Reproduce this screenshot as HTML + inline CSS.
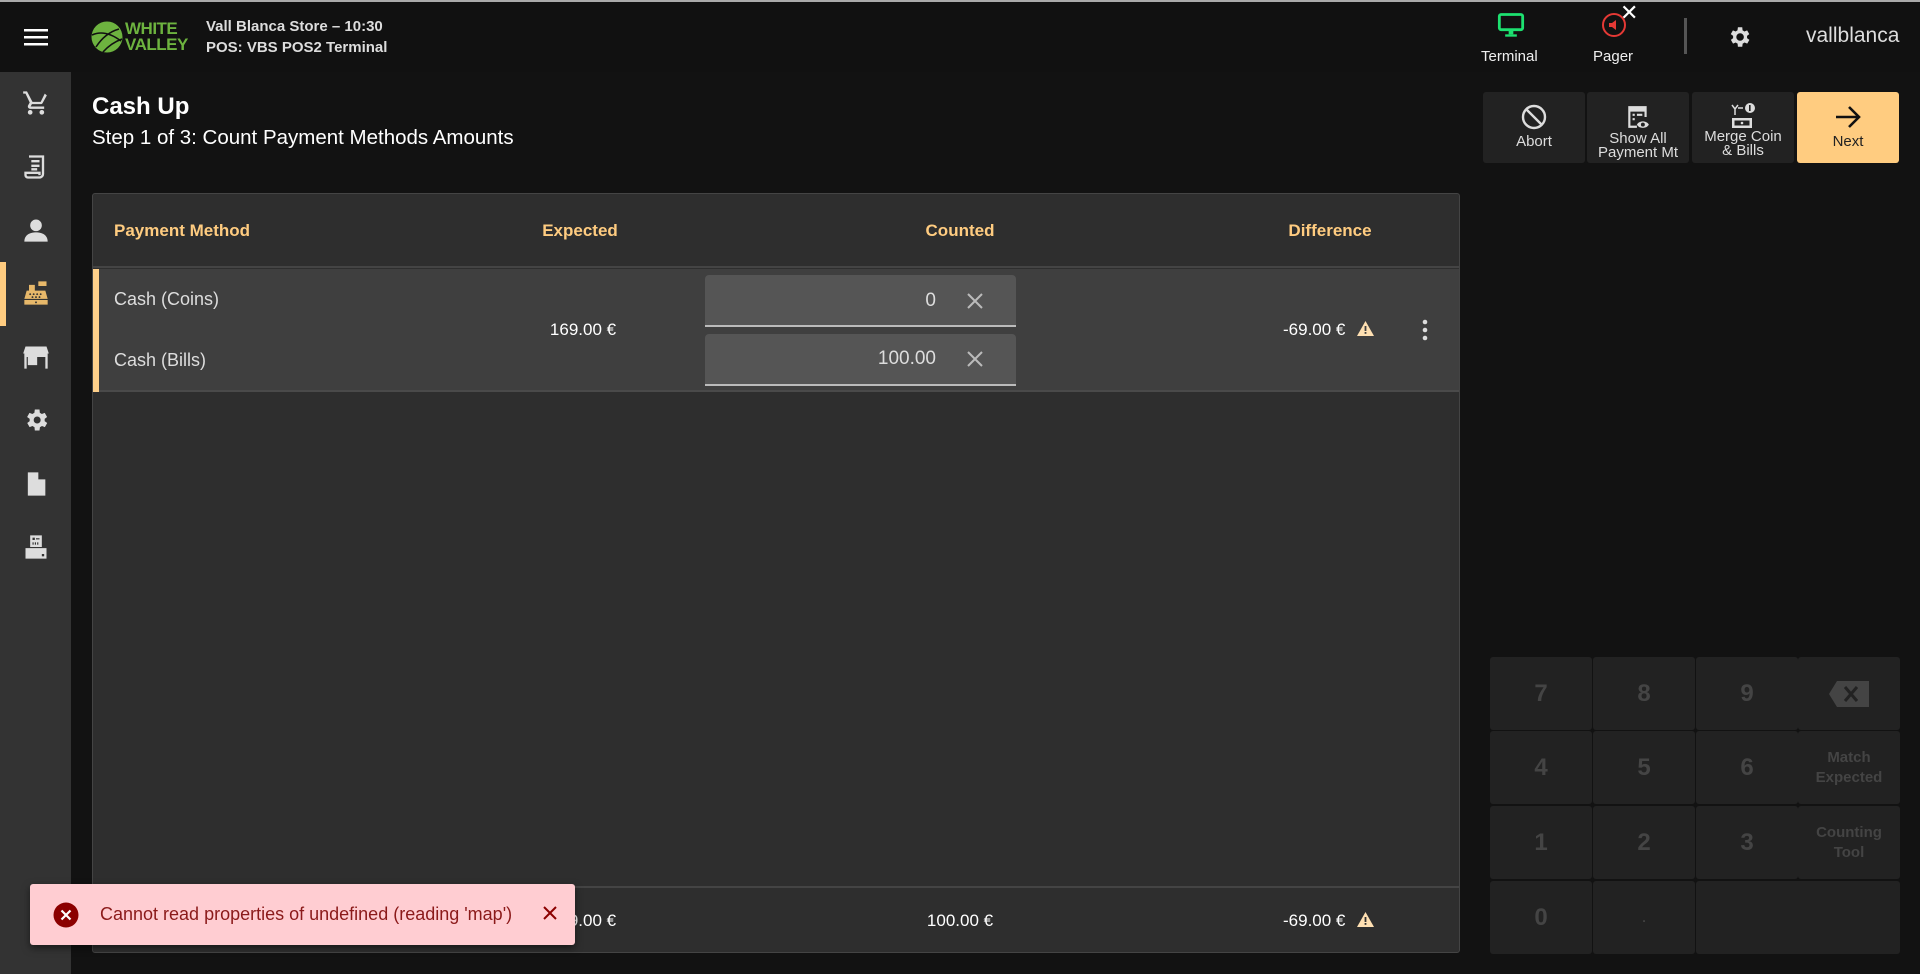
<!DOCTYPE html>
<html><head><meta charset="utf-8"><style>
*{margin:0;padding:0;box-sizing:border-box}
body{width:1920px;height:974px;background:#121212;font-family:"Liberation Sans",Arial,sans-serif;color:#fff;position:relative;overflow:hidden}
.a{position:absolute}
.top{left:0;top:0;width:1920px;height:72px;background:#111;border-top:2px solid #aaa}
.side{left:0;top:72px;width:71px;height:902px;background:#333}
.ic{position:absolute;left:22px;width:28px;height:28px}
.hdr{color:#ffcc80;font-weight:bold;font-size:17px}
.btn{position:absolute;top:92px;height:71px;width:102px;background:#222;border-radius:3px;text-align:center;font-size:15px;color:#ddd;line-height:14px}
.key{position:absolute;width:102px;height:73px;background:#222;border-radius:3px;color:#444;font-weight:bold;font-size:24px;display:flex;align-items:center;justify-content:center;text-align:center}
.key.s{font-size:15px;font-weight:bold;line-height:20px}
</style></head><body>
<div class="a top"></div>
<svg class="a" style="left:24px;top:28px" width="24" height="18"><rect y="1" width="24" height="2.5" fill="#fff"/><rect y="8" width="24" height="2.5" fill="#fff"/><rect y="15" width="24" height="2.5" fill="#fff"/></svg>
<svg class="a" style="left:91px;top:21px" width="33" height="33"><circle cx="16" cy="16" r="15.5" fill="#6db33f"/><path d="M1 14 Q14 8 30 20 M5 26 Q14 12 28 8 M12 31 Q20 22 31 18" stroke="#111" stroke-width="1.6" fill="none"/></svg>
<div class="a" style="left:125px;top:21px;color:#6db33f;font-weight:bold;font-size:17px;line-height:16px;letter-spacing:-0.5px">WHITE<br>VALLEY</div>
<div class="a" style="left:206px;top:16px;font-size:15px;line-height:21px;color:#ddd;font-weight:bold">Vall Blanca Store – 10:30<br>POS: VBS POS2 Terminal</div>
<svg class="a" style="left:1497px;top:12px" width="28" height="26" viewBox="0 0 24 22"><rect x="2" y="2" width="20" height="13" rx="1.5" fill="none" stroke="#1de170" stroke-width="2.4"/><rect x="10" y="15" width="4" height="4" fill="#1de170"/><rect x="7" y="19" width="10" height="2" fill="#1de170"/></svg>
<div class="a" style="left:1481px;top:48px;font-size:15px;color:#eee">Terminal</div>
<svg class="a" style="left:1600px;top:11px" width="28" height="28"><circle cx="14" cy="14" r="11" fill="none" stroke="#e53935" stroke-width="2"/><path d="M9 12h3l4-3v10l-4-3H9z" fill="#e53935"/></svg>
<div class="a" style="left:1620px;top:0px;font-size:22px;color:#fff">✕</div>
<div class="a" style="left:1593px;top:48px;font-size:15px;color:#eee">Pager</div>
<div class="a" style="left:1684px;top:18px;width:3px;height:36px;background:#555"></div>
<svg class="a" style="left:1726px;top:24px" width="26" height="26" viewBox="0 0 24 24"><path fill="#ddd" d="M19.4 13a7.5 7.5 0 000-2l2.1-1.6-2-3.5-2.5 1a7 7 0 00-1.7-1L15 3h-4l-.4 2.9a7 7 0 00-1.7 1l-2.5-1-2 3.5L6.6 11a7.5 7.5 0 000 2l-2.1 1.6 2 3.5 2.5-1a7 7 0 001.7 1L11 21h4l.4-2.9a7 7 0 001.7-1l2.5 1 2-3.5zM13 15.5a3.5 3.5 0 110-7 3.5 3.5 0 010 7z"/></svg>
<div class="a" style="left:1806px;top:24px;font-size:21px;color:#ddd">vallblanca</div>

<div class="a side"></div>
<div class="a" style="left:0;top:262px;width:6px;height:64px;background:#ffcc80"></div>
<svg class="ic" style="top:89px" viewBox="0 0 24 24"><path fill="#ddd" d="M7 18a2 2 0 100 4 2 2 0 000-4zM1 2v2h2l3.6 7.6L5.2 14c-.1.3-.2.6-.2 1 0 1.1.9 2 2 2h12v-2H7.4l1.1-2h7.5c.8 0 1.4-.4 1.7-1l3.6-6.5L19.5 4 16 11H9L4.3 2zm16 16a2 2 0 100 4 2 2 0 000-4z"/></svg>
<svg class="ic" style="top:153px" viewBox="0 0 24 24"><path fill="none" stroke="#ddd" stroke-width="2" d="M6 3h12v15a3 3 0 01-3 3H5a2 2 0 01-2-2v-2h12v2M8 7h7M8 11h7M8 14h5"/></svg>
<svg class="ic" style="top:216px" viewBox="0 0 24 24"><circle cx="12" cy="8" r="5" fill="#ddd"/><path d="M2 22c0-6 5-8 10-8s10 2 10 8z" fill="#ddd"/></svg>
<svg class="ic" style="top:279px" viewBox="0 0 24 24"><path fill="#e7b86a" d="M4 10h16l2 7H2zM6 5h5v5H6zM14 2h7v4h-7zM2 18h20v4H2z"/><g fill="#333"><circle cx="7" cy="13" r=".8"/><circle cx="10" cy="13" r=".8"/><circle cx="13" cy="13" r=".8"/><circle cx="16" cy="13" r=".8"/><circle cx="9" cy="15.5" r=".8"/><circle cx="12" cy="15.5" r=".8"/><circle cx="15" cy="15.5" r=".8"/><circle cx="12" cy="20" r=".8"/></g></svg>
<svg class="ic" style="top:343px" viewBox="0 0 24 24"><path fill="#ddd" d="M3 3h18l2 6H1zM2 9h20v13h-2v-10H4v10h-2zM5 12h8v7H5z"/></svg>
<svg class="ic" style="top:406px" viewBox="0 0 24 24"><path fill="#ddd" d="M19.4 13a7.5 7.5 0 000-2l2.1-1.6-2-3.5-2.5 1a7 7 0 00-1.7-1L15 3h-4l-.4 2.9a7 7 0 00-1.7 1l-2.5-1-2 3.5L6.6 11a7.5 7.5 0 000 2l-2.1 1.6 2 3.5 2.5-1a7 7 0 001.7 1L11 21h4l.4-2.9a7 7 0 001.7-1l2.5 1 2-3.5zM13 15a3 3 0 110-6 3 3 0 010 6z"/></svg>
<svg class="ic" style="top:470px" viewBox="0 0 24 24"><path fill="#ddd" d="M5 2h9l6 6v14H5zM14 2v6h6z"/></svg>
<svg class="ic" style="top:533px" viewBox="0 0 24 24"><path fill="#ddd" d="M7 2h10v10H7zM3 13h18v9H3z"/><g fill="#333"><rect x="9" y="4" width="2" height="2"/><rect x="12" y="4.5" width="3" height="1"/><rect x="9" y="8" width="1" height="2"/><rect x="11" y="8" width="1" height="2"/><rect x="13" y="8" width="1" height="2"/><rect x="17" y="18" width="2" height="2"/></g></svg>

<div class="a" style="left:92px;top:93px;font-size:24px;font-weight:bold">Cash Up</div>
<div class="a" style="left:92px;top:126px;font-size:20.5px">Step 1 of 3: Count Payment Methods Amounts</div>

<div class="a" style="left:92px;top:193px;width:1368px;height:760px;background:#2e2e2e;border:1px solid #444;border-radius:3px"></div>
<div class="a" style="left:93px;top:266px;width:1366px;height:2px;background:#444"></div>
<div class="a hdr" style="left:114px;top:221px">Payment Method</div>
<div class="a hdr" style="left:530px;top:221px;width:100px;text-align:center">Expected</div>
<div class="a hdr" style="left:910px;top:221px;width:100px;text-align:center">Counted</div>
<div class="a hdr" style="left:1270px;top:221px;width:120px;text-align:center">Difference</div>

<div class="a" style="left:93px;top:269px;width:1366px;height:123px;background:#3f3f3f;border-bottom:2px solid #4a4a4a"></div>
<div class="a" style="left:93px;top:269px;width:6px;height:123px;background:#ffd08a"></div>
<div class="a" style="left:114px;top:289px;font-size:18px;color:#ddd">Cash (Coins)</div>
<div class="a" style="left:114px;top:350px;font-size:18px;color:#ddd">Cash (Bills)</div>
<div class="a" style="left:530px;top:320px;width:106px;text-align:center;font-size:17px">169.00 €</div>
<div class="a" style="left:705px;top:275px;width:311px;height:52px;background:#555;border-radius:4px 4px 0 0;border-bottom:2px solid #bbb"></div>
<div class="a" style="left:705px;top:334px;width:311px;height:52px;background:#555;border-radius:4px 4px 0 0;border-bottom:2px solid #bbb"></div>
<div class="a" style="left:800px;top:290px;width:136px;text-align:right;font-size:19px;color:#ddd">0</div>
<div class="a" style="left:800px;top:348px;width:136px;text-align:right;font-size:19px;color:#ddd">100.00</div>
<svg class="a" style="left:966px;top:292px" width="18" height="18"><path d="M2 2L16 16M16 2L2 16" stroke="#bbb" stroke-width="2"/></svg>
<svg class="a" style="left:966px;top:350px" width="18" height="18"><path d="M2 2L16 16M16 2L2 16" stroke="#bbb" stroke-width="2"/></svg>
<div class="a" style="left:1283px;top:320px;font-size:17px">-69.00 €</div>
<svg class="a" style="left:1357px;top:321px" width="17" height="15"><path d="M8.5 0L17 15H0z" fill="#ffe0b2"/><rect x="7.6" y="5" width="1.8" height="5" fill="#3f3f3f"/><rect x="7.6" y="11" width="1.8" height="1.8" fill="#3f3f3f"/></svg>
<svg class="a" style="left:1422px;top:319px" width="6" height="22"><circle cx="3" cy="3" r="2.3" fill="#ddd"/><circle cx="3" cy="11" r="2.3" fill="#ddd"/><circle cx="3" cy="19" r="2.3" fill="#ddd"/></svg>

<div class="a" style="left:93px;top:886px;width:1366px;height:2px;background:#444"></div>
<div class="a" style="left:530px;top:911px;width:106px;text-align:center;font-size:17px">169.00 €</div>
<div class="a" style="left:907px;top:911px;width:106px;text-align:center;font-size:17px">100.00 €</div>
<div class="a" style="left:1283px;top:911px;font-size:17px">-69.00 €</div>
<svg class="a" style="left:1357px;top:912px" width="17" height="15"><path d="M8.5 0L17 15H0z" fill="#ffe0b2"/><rect x="7.6" y="5" width="1.8" height="5" fill="#2e2e2e"/><rect x="7.6" y="11" width="1.8" height="1.8" fill="#2e2e2e"/></svg>

<div class="a" style="left:30px;top:884px;width:545px;height:61px;background:#ffcdd2;border-radius:3px;box-shadow:0 3px 8px rgba(0,0,0,.5)"></div>
<svg class="a" style="left:53px;top:902px" width="26" height="26"><circle cx="13" cy="13" r="12.5" fill="#8b0000"/><path d="M8.5 8.5L17.5 17.5M17.5 8.5L8.5 17.5" stroke="#fff" stroke-width="2.2"/></svg>
<div class="a" style="left:100px;top:904px;font-size:18px;color:#8b1a1a">Cannot read properties of undefined (reading 'map')</div>
<svg class="a" style="left:542px;top:905px" width="16" height="16"><path d="M2 2L14 14M14 2L2 14" stroke="#8b0000" stroke-width="2"/></svg>

<div class="btn" style="left:1483px"><svg style="margin-top:12px" width="26" height="26"><circle cx="13" cy="13" r="11" stroke="#ddd" stroke-width="2.4" fill="none"/><path d="M5 5L21 21" stroke="#ddd" stroke-width="2.4"/></svg><div style="margin-top:2px">Abort</div></div>
<div class="btn" style="left:1587px"><svg style="margin-top:12px" width="26" height="26" viewBox="0 0 24 24"><path d="M3 2h17v10h-2V7H5v13h6v2H3z" fill="#ddd"/><path d="M7 9h2v2H7zM11 9h5v2h-5zM7 13h2v2H7z" fill="#ddd"/><path d="M11 19c2-4 9-4 11 0-2 4-9 4-11 0z" fill="#ddd"/><circle cx="16.5" cy="19" r="1.8" fill="#222"/></svg><div style="margin-top:-1px">Show All<br>Payment Mt</div></div>
<div class="btn" style="left:1692px"><svg style="margin-top:10px" width="30" height="28" viewBox="0 0 30 28"><circle cx="22" cy="6" r="5" fill="#ddd"/><rect x="21" y="3" width="1.6" height="6" fill="#222"/><path d="M4 3l3 4 3-4M7 7v6M10 6h5" stroke="#ddd" stroke-width="1.5" fill="none"/><rect x="4" y="16" width="20" height="10" fill="#ddd"/><rect x="6.5" y="18.5" width="15" height="5" fill="#222"/><circle cx="14" cy="21" r="1.3" fill="#ddd"/></svg><div style="margin-top:-3px">Merge Coin<br>&amp; Bills</div></div>
<div class="btn" style="left:1797px;background:#ffcc80;color:#222"><svg style="margin-top:12px" width="28" height="26" viewBox="0 0 28 26"><path d="M2 13h23M15 3l10 10-10 10" stroke="#111" stroke-width="2.6" fill="none"/></svg><div style="margin-top:2px">Next</div></div>

<div class="key" style="left:1490px;top:657px">7</div>
<div class="key" style="left:1593px;top:657px">8</div>
<div class="key" style="left:1696px;top:657px">9</div>
<div class="key" style="left:1798px;top:657px"><svg width="40" height="26" viewBox="0 0 40 26"><path d="M8 0h32v26H8L0 13z" fill="#444"/><path d="M16 6l12 14M28 6L16 20" stroke="#222" stroke-width="3"/></svg></div>
<div class="key" style="left:1490px;top:731px">4</div>
<div class="key" style="left:1593px;top:731px">5</div>
<div class="key" style="left:1696px;top:731px">6</div>
<div class="key s" style="left:1798px;top:731px">Match<br>Expected</div>
<div class="key" style="left:1490px;top:806px">1</div>
<div class="key" style="left:1593px;top:806px">2</div>
<div class="key" style="left:1696px;top:806px">3</div>
<div class="key s" style="left:1798px;top:806px">Counting<br>Tool</div>
<div class="key" style="left:1490px;top:881px">0</div>
<div class="key" style="left:1593px;top:881px;font-size:12px">.</div>
<div class="key" style="left:1696px;top:881px;width:204px"></div>
</body></html>
